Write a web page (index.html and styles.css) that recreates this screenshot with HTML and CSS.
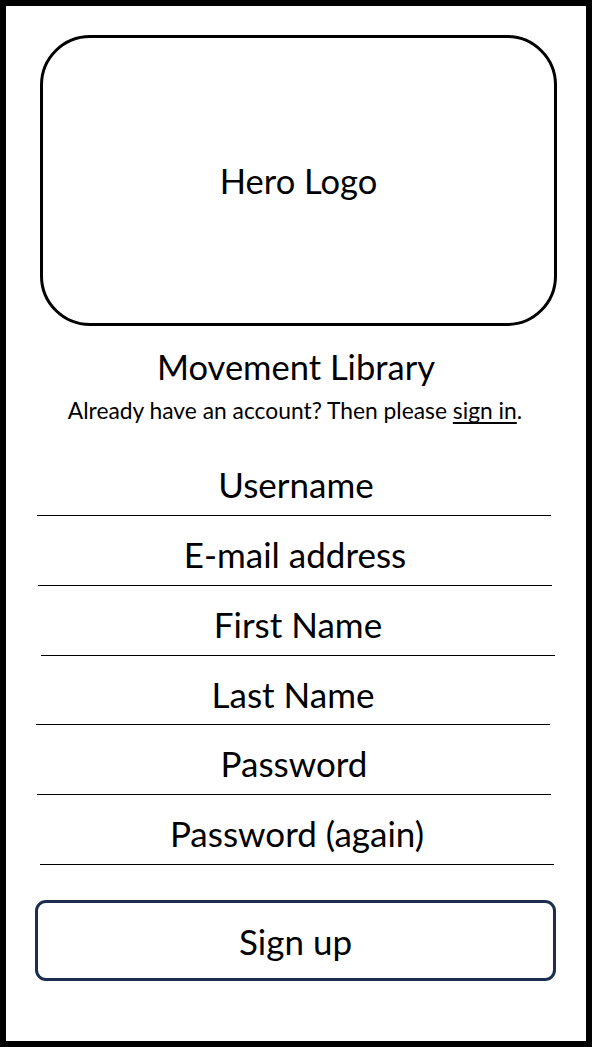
FILE: index.html
```html
<!DOCTYPE html>
<html lang="en">
<head>
<meta charset="utf-8">
<title>Sign up - Movement Library</title>
<link rel="stylesheet" href="styles.css">
</head>
<body>
<div class="frame">
  <div class="hero">Hero Logo</div>
  <h1 class="title">Movement Library</h1>
  <p class="subtitle">Already have an account? Then please <a href="#" class="link">sign in</a>.</p>
  <div class="form">
    <div class="field f1">Username</div>
    <div class="field f2">E-mail address</div>
    <div class="field f3">First Name</div>
    <div class="field f4">Last Name</div>
    <div class="field f5">Password</div>
    <div class="field f6">Password (again)</div>
  </div>
  <button class="signup">Sign up</button>
</div>
</body>
</html>
```

FILE: styles.css
```css
html, body {
  margin: 0;
  padding: 0;
  background: #ffffff;
}
body {
  font-family: Lato, "Open Sans", "Liberation Sans", sans-serif;
  color: #000000;
}
.frame {
  box-sizing: border-box;
  width: 592px;
  height: 1047px;
  border: 6px solid #000000;
  display: flex;
  flex-direction: column;
  align-items: stretch;
}
.hero {
  box-sizing: border-box;
  margin: 29px 0 0 34px;
  width: 517px;
  height: 291px;
  border: 3px solid #000000;
  border-radius: 50px;
  display: flex;
  align-items: center;
  justify-content: center;
  font-size: 34.5px;
}
.title {
  margin: 21px 0 0 0;
  font-weight: normal;
  font-size: 34.5px;
  line-height: 40px;
  text-align: center;
}
.subtitle {
  margin: 9px 0 0 0;
  font-size: 22.8px;
  line-height: 28px;
  text-align: center;
  padding-right: 2px;
}
.link {
  color: #000000;
  text-decoration: underline;
  text-decoration-skip-ink: none;
  text-decoration-thickness: 1.5px;
  text-underline-offset: 3px;
}
.form {
  display: flex;
  flex-direction: column;
  margin-top: 22px;
}
.field {
  box-sizing: border-box;
  width: 514px;
  padding: 18px 0 11px 0;
  line-height: 40px;
  font-size: 35px;
  text-align: center;
  border-bottom: 1px solid #000000;
}
.f1 { margin-left: 31px; padding-left: 4px; }
.f2 { margin-left: 32px; }
.f3 { margin-left: 35px; }
.f4 { margin-left: 30px; padding-bottom: 10px; }
.f5 { margin-left: 31px; }
.f6 { margin-left: 34px; }
.signup {
  box-sizing: border-box;
  margin: 35px 0 0 29px;
  width: 521px;
  height: 81px;
  border: 3px solid #1c2e4e;
  border-radius: 11px;
  background: #ffffff;
  font-family: inherit;
  font-size: 35px;
  color: #000000;
  padding: 0;
}
```
